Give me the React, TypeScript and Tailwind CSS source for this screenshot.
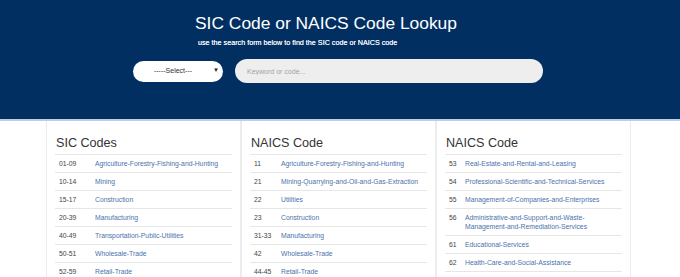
const SIC = [
  ["01-09", "Agriculture-Forestry-Fishing-and-Hunting"],
  ["10-14", "Mining"],
  ["15-17", "Construction"],
  ["20-39", "Manufacturing"],
  ["40-49", "Transportation-Public-Utilities"],
  ["50-51", "Wholesale-Trade"],
  ["52-59", "Retail-Trade"],
  ["60-67", "Finance-Insurance-Real-Estate"],
  ["70-89", "Services"],
  ["91-99", "Public-Administration"],
];

const NAICS_A = [
  ["11", "Agriculture-Forestry-Fishing-and-Hunting"],
  ["21", "Mining-Quarrying-and-Oil-and-Gas-Extraction"],
  ["22", "Utilities"],
  ["23", "Construction"],
  ["31-33", "Manufacturing"],
  ["42", "Wholesale-Trade"],
  ["44-45", "Retail-Trade"],
  ["48-49", "Transportation-and-Warehousing"],
  ["51", "Information"],
  ["52", "Finance-and-Insurance"],
];

const NAICS_B = [
  ["53", "Real-Estate-and-Rental-and-Leasing"],
  ["54", "Professional-Scientific-and-Technical-Services"],
  ["55", "Management-of-Companies-and-Enterprises"],
  ["56", "Administrative-and-Support-and-Waste-Management-and-Remediation-Services"],
  ["61", "Educational-Services"],
  ["62", "Health-Care-and-Social-Assistance"],
  ["71", "Arts-Entertainment-and-Recreation"],
  ["72", "Accommodation-and-Food-Services"],
  ["81", "Other-Services-(except-Public-Administration)"],
  ["92", "Public-Administration"],
];

interface CodeCardProps {
  title: string;
  rows: string[][];
  codeWidth: string;
}

function CodeCard({ title, rows, codeWidth }: CodeCardProps) {
  return (
    <div className="w-[195px] shrink-0 border-x border-[#ececec] px-[8px] pt-[15px]">
      <h2 className="mb-[4px] pl-px text-[12.6px] leading-[14px] text-[#333]">{title}</h2>
      <table className="w-full border-collapse">
        <tbody>
          {rows.map(([code, name]) => (
            <tr key={code} className="border-t border-[#e6e6e6]">
              <td className={`${codeWidth} py-[4px] pl-[4px] align-top text-[6.8px] leading-[9px] text-[#444]`}>
                {code}
              </td>
              <td className="py-[4px] pr-[2px] align-top text-[6.8px] leading-[9px] text-[#4a72ad]">
                <a href="#">{name}</a>
              </td>
            </tr>
          ))}
        </tbody>
      </table>
    </div>
  );
}

export default function App() {
  return (
    <div className="h-[277px] overflow-hidden bg-white font-['Liberation_Sans',Arial,sans-serif]">
      <header className="h-[121px] border-b-2 border-[#b9cfe8] bg-[#022f62] pt-[13px]">
        <h1 className="ml-[195px] text-[17.4px] leading-[20px] text-white">SIC Code or NAICS Code Lookup</h1>
        <p className="ml-[198px] mt-[5px] text-[7.2px] leading-[9px] text-[#eef2f8] [text-shadow:0_0_0.4px_#fff]">
          use the search form below to find the SIC code or NAICS code
        </p>
        <div className="ml-[133px] mt-[12px] flex items-center gap-[12px]">
          <div className="relative flex h-[21px] w-[90px] items-center justify-center rounded-full bg-white text-[7px] text-[#333]">
            <span className="-ml-[10px]">-----Select---</span>
            <span className="absolute right-[4px] top-[5px] text-[6px] text-[#222]">▼</span>
          </div>
          <input
            className="h-[24px] w-[308px] rounded-full bg-[#eeeeee] px-[12px] text-[7px] text-[#333] outline-none placeholder:text-[#a3a3a3]"
            placeholder="Keyword or code..."
          />
        </div>
      </header>
      <main className="ml-[46px] flex">
        <CodeCard title="SIC Codes" rows={SIC} codeWidth="w-[40px]" />
        <CodeCard title="NAICS Code" rows={NAICS_A} codeWidth="w-[31px]" />
        <CodeCard title="NAICS Code" rows={NAICS_B} codeWidth="w-[20px]" />
      </main>
    </div>
  );
}
